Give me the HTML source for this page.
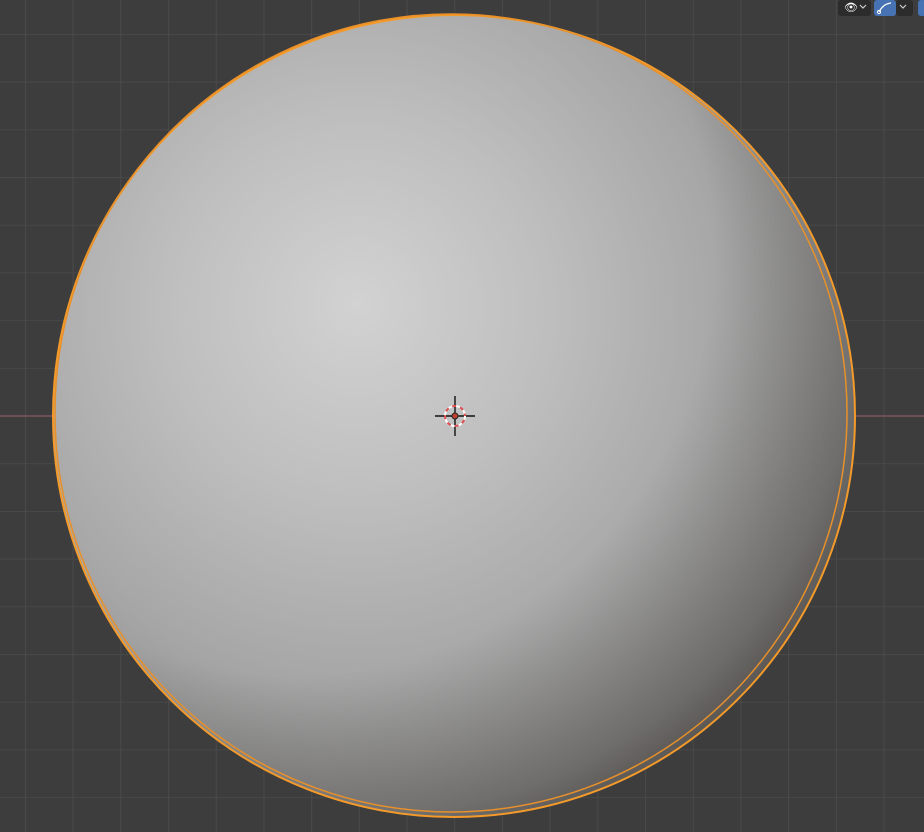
<!DOCTYPE html>
<html><head><style>
html,body{margin:0;padding:0;background:#3d3d3d;width:924px;height:832px;overflow:hidden}
</style></head><body>
<svg width="924" height="832" viewBox="0 0 924 832" xmlns="http://www.w3.org/2000/svg">
<defs>
<pattern id="g" x="25" y="34" width="47.7" height="47.7" patternUnits="userSpaceOnUse">
<path d="M0 0H47.7M0 0V47.7" stroke="#4c4c4c" stroke-width="1.6" fill="none"/>
</pattern>
<radialGradient id="s" cx="0.38" cy="0.38" r="0.8" fx="0.38" fy="0.36">
<stop offset="0" stop-color="#d2d2d2"/>
<stop offset="0.3" stop-color="#bebebe"/>
<stop offset="0.58" stop-color="#a6a6a6"/>
<stop offset="0.78" stop-color="#8c8c8c"/>
<stop offset="0.92" stop-color="#5f5b56"/>
<stop offset="1" stop-color="#4a4540"/>
</radialGradient>
<radialGradient id="d" cx="0.3" cy="0.3" r="0.95">
<stop offset="0.55" stop-color="#2a2520" stop-opacity="0"/>
<stop offset="0.8" stop-color="#2a2520" stop-opacity="0.35"/>
<stop offset="1" stop-color="#2a2520" stop-opacity="0.6"/>
</radialGradient>
</defs>
<rect width="924" height="832" fill="#3d3d3d"/>
<rect width="924" height="832" fill="url(#g)"/>
<line x1="0" y1="416" x2="924" y2="416" stroke="#8a5a62" stroke-width="1.2"/>
<circle cx="454" cy="416" r="401" fill="url(#s)"/>
<circle cx="454" cy="416" r="401" fill="url(#d)"/>
<circle cx="454" cy="416" r="401" fill="none" stroke="#f39a2a" stroke-width="2"/>
<ellipse cx="451" cy="413" rx="396" ry="399" fill="none" stroke="#e8902a" stroke-width="1.5"/>
<g transform="translate(455,416)">
<line x1="-20" y1="0" x2="20" y2="0" stroke="#111" stroke-width="1.4"/>
<line x1="0" y1="-20" x2="0" y2="20" stroke="#111" stroke-width="1.4"/>
<circle r="10" fill="none" stroke="#fff" stroke-width="2" stroke-dasharray="4 4"/>
<circle r="10" fill="none" stroke="#e05050" stroke-width="2" stroke-dasharray="4 4" stroke-dashoffset="4"/>
<circle r="3" fill="#c04030" stroke="#222" stroke-width="1"/>
</g>
<rect x="838" y="0" width="33" height="16" rx="3" fill="#2c2c2c"/>
<text x="844" y="11" font-family="DejaVu Sans" font-size="11" fill="#fff">👁</text>
<path d="M860 5l3 3 3-3" stroke="#ccc" fill="none" stroke-width="1.2"/>
<rect x="874" y="0" width="22" height="16" rx="3" fill="#4772b3"/>
<path d="M879 12q4-8 12-9" stroke="#fff" fill="none" stroke-width="1.2"/><circle cx="879" cy="12" r="1.6" fill="none" stroke="#fff"/>
<rect x="896" y="0" width="17" height="16" rx="3" fill="#2c2c2c"/>
<path d="M900 5l3 3 3-3" stroke="#ccc" fill="none" stroke-width="1.2"/>
<rect x="918" y="0" width="8" height="16" rx="3" fill="#4772b3"/>
</svg>
</body></html>
